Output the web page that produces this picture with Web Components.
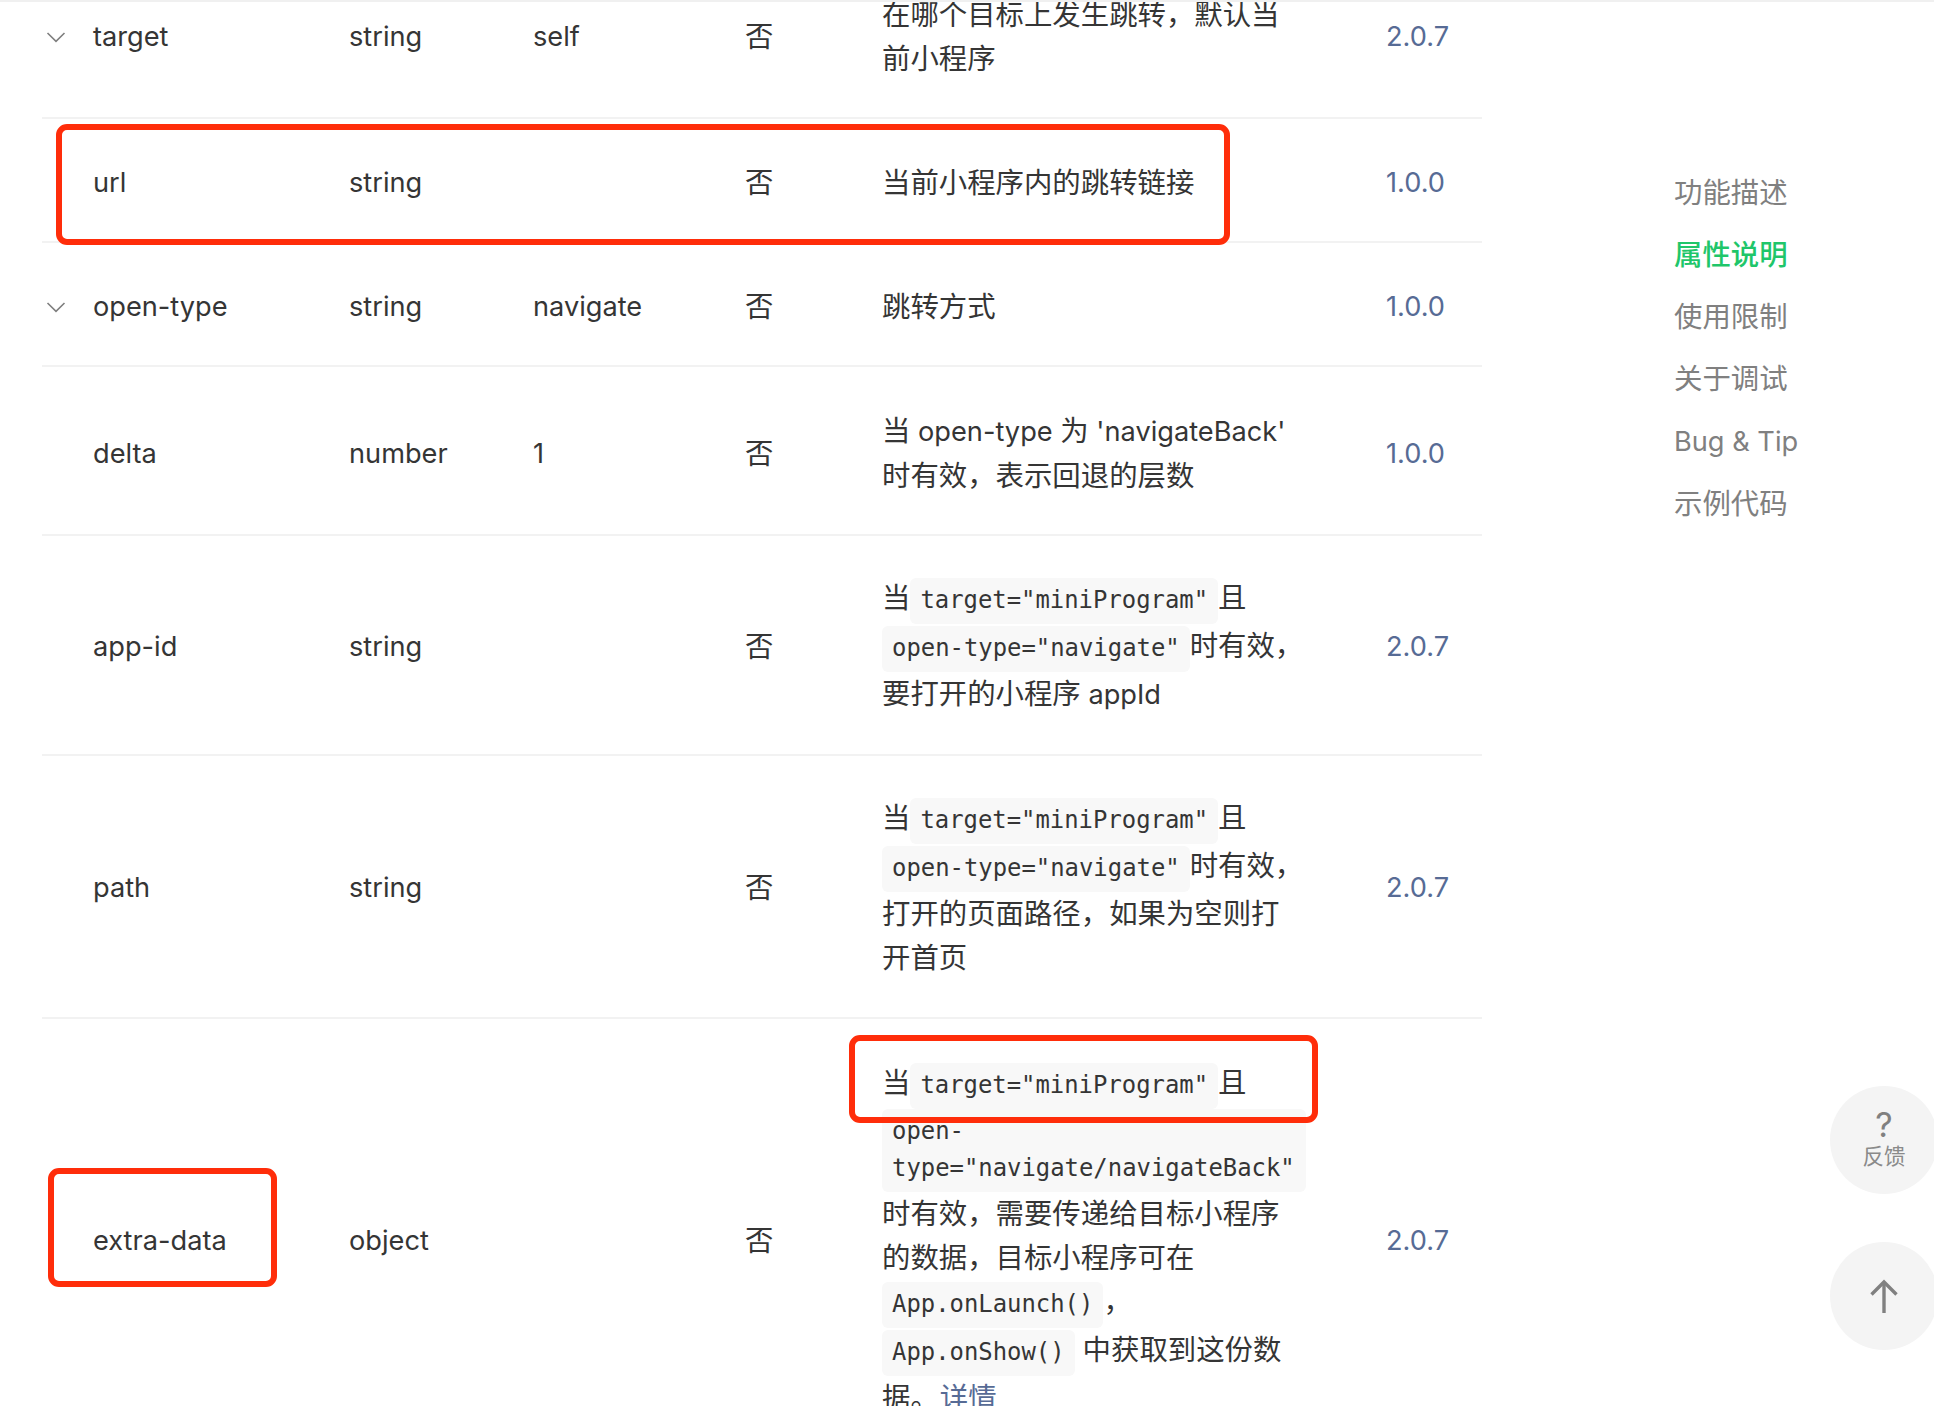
<!DOCTYPE html>
<html lang="zh">
<head>
<meta charset="utf-8">
<title>navigator</title>
<style>
  html, body { margin: 0; height: 1406px; overflow: hidden; background: #fff; }
  body { font-family: Inter, "Noto Sans CJK SC", sans-serif; color: #353535; }
  .l { font-size: 27.2px; }
</style>
</head>
<body>
<doc-page>
  <prop-table>
    <prop-row expandable>
      <span slot="name">target</span><span slot="type">string</span><span slot="def">self</span><span slot="req">否</span>
      <span slot="desc">在哪个目标上发生跳转，默认当前小程序</span><span slot="ver">2.0.7</span>
    </prop-row>
    <prop-row>
      <span slot="name">url</span><span slot="type">string</span><span slot="req">否</span>
      <span slot="desc">当前小程序内的跳转链接</span><span slot="ver">1.0.0</span>
    </prop-row>
    <prop-row expandable>
      <span slot="name">open-type</span><span slot="type">string</span><span slot="def">navigate</span><span slot="req">否</span>
      <span slot="desc">跳转方式</span><span slot="ver">1.0.0</span>
    </prop-row>
    <prop-row>
      <span slot="name">delta</span><span slot="type">number</span><span slot="def">1</span><span slot="req">否</span>
      <span slot="desc">当<span class="l"> open-type </span>为<span class="l"> 'navigateBack' </span>时有效，表示回退的层数</span><span slot="ver">1.0.0</span>
    </prop-row>
    <prop-row style="--pt:40px;--pb:37px">
      <span slot="name">app-id</span><span slot="type">string</span><span slot="req">否</span>
      <span slot="desc">当<code-tag>target="miniProgram"</code-tag>且<code-tag>open-type="navigate"</code-tag>时有效，要打开的小程序<span class="l"> appId</span></span><span slot="ver">2.0.7</span>
    </prop-row>
    <prop-row style="--pt:40px;--pb:37px">
      <span slot="name">path</span><span slot="type">string</span><span slot="req">否</span>
      <span slot="desc">当<code-tag>target="miniProgram"</code-tag>且<code-tag>open-type="navigate"</code-tag>时有效，打开的页面路径，如果为空则打开首页</span><span slot="ver">2.0.7</span>
    </prop-row>
    <prop-row style="--pt:42px;--pb:37px">
      <span slot="name">extra-data</span><span slot="type">object</span><span slot="req">否</span>
      <span slot="desc">当<code-tag>target="miniProgram"</code-tag>且<code-tag>open-type="navigate/navigateBack"</code-tag>时有效，需要传递给目标小程序的数据，目标小程序可在<code-tag>App.onLaunch()</code-tag>，<code-tag>App.onShow()</code-tag> 中获取到这份数据。<doc-link>详情</doc-link></span><span slot="ver">2.0.7</span>
    </prop-row>
  </prop-table>
  <toc-nav slot="aside">
    <toc-item>功能描述</toc-item>
    <toc-item active>属性说明</toc-item>
    <toc-item>使用限制</toc-item>
    <toc-item>关于调试</toc-item>
    <toc-item><span class="l">Bug &amp; Tip</span></toc-item>
    <toc-item>示例代码</toc-item>
  </toc-nav>
</doc-page>

<mark-box style="--x:56px;--y:124px;--w:1174px;--h:121px"></mark-box>
<mark-box style="--x:849px;--y:1035px;--w:469px;--h:88px"></mark-box>
<mark-box style="--x:48px;--y:1168px;--w:229px;--h:119px"></mark-box>

<float-btn style="--top:1086px">
  <span class="q">?</span>
  <span>反馈</span>
</float-btn>
<float-btn style="--top:1242px">
  <svg width="30" height="34" viewBox="0 0 30 34" fill="none" stroke="#808080" stroke-width="3.4"><path d="M15 34V3"/><path d="M2.5 15.5 15 3l12.5 12.5"/></svg>
</float-btn>

<script>
class DocPage extends HTMLElement {
  constructor() {
    super();
    this.attachShadow({ mode: 'open' }).innerHTML = `
      <style>
        :host { display: block; }
        .band { height: 2px; background: #f0f0f0; position: relative; z-index: 1; }
        .wrap { display: flex; align-items: flex-start; padding-left: 42px; }
        .main { width: 1440px; margin-top: -51px; }
        .aside { margin-left: 192px; padding-top: 169px; }
      </style>
      <div class="band"></div>
      <div class="wrap">
        <div class="main"><slot></slot></div>
        <div class="aside"><slot name="aside"></slot></div>
      </div>
    `;
  }
}

class PropTable extends HTMLElement {
  constructor() {
    super();
    this.attachShadow({ mode: 'open' }).innerHTML = `
      <style>:host { display: block; }</style>
      <slot></slot>
    `;
  }
}

class PropRow extends HTMLElement {
  constructor() {
    super();
    this.attachShadow({ mode: 'open' }).innerHTML = `
      <style>
        :host {
          display: grid;
          grid-template-columns: 51px 256px 184px 212px 137px 504px 96px;
          align-items: center;
          padding: var(--pt, 42px) 0 var(--pb, 36px);
          border-bottom: 2px solid #f2f2f2;
          font-size: 27.2px;
          line-height: 44px;
        }
        .arrow { display: flex; padding-left: 4px; }
        .arrow svg { display: none; }
        :host([expandable]) .arrow svg { display: block; }
        .req, .desc { font-size: 28.4px; }
        .desc { width: 424px; }
        .ver { color: #576b95; }
      </style>
      <div class="arrow">
        <svg width="20" height="12" viewBox="0 0 20 12" fill="none" stroke="#7f7f7f" stroke-width="1.6"><path d="M1.5 2 10 10.3 18.5 2"/></svg>
      </div>
      <div><slot name="name"></slot></div>
      <div><slot name="type"></slot></div>
      <div><slot name="def"></slot></div>
      <div class="req"><slot name="req"></slot></div>
      <div class="desc"><slot name="desc"></slot></div>
      <div class="ver"><slot name="ver"></slot></div>
    `;
  }
}

class CodeTag extends HTMLElement {
  constructor() {
    super();
    this.attachShadow({ mode: 'open' }).innerHTML = `
      <style>
        :host {
          display: inline-block;
          box-sizing: border-box;
          max-width: 100%;
          padding: 4px 10px 5px;
          border-radius: 6px;
          background: #f8f8f8;
          font-family: "DejaVu Sans Mono", monospace;
          font-size: 23.9px;
          line-height: 37px;
        }
      </style>
      <slot></slot>
    `;
  }
}

class DocLink extends HTMLElement {
  constructor() {
    super();
    this.attachShadow({ mode: 'open' }).innerHTML = `
      <style>:host { color: #576b95; margin-left: -7px; }</style>
      <slot></slot>
    `;
  }
}

class TocNav extends HTMLElement {
  constructor() {
    super();
    this.attachShadow({ mode: 'open' }).innerHTML = `
      <style>:host { display: flex; flex-direction: column; gap: 18px; }</style>
      <slot></slot>
    `;
  }
}

class TocItem extends HTMLElement {
  constructor() {
    super();
    this.attachShadow({ mode: 'open' }).innerHTML = `
      <style>
        :host { display: block; font-size: 28.4px; line-height: 44px; color: #808080; white-space: nowrap; }
        :host([active]) { color: #1fc66a; font-weight: 500; }
      </style>
      <slot></slot>
    `;
  }
}

class MarkBox extends HTMLElement {
  constructor() {
    super();
    this.attachShadow({ mode: 'open' }).innerHTML = `
      <style>
        :host {
          position: absolute;
          left: var(--x); top: var(--y);
          width: var(--w); height: var(--h);
          box-sizing: border-box;
          border: 6px solid #ff2d0a;
          border-radius: 11px;
        }
      </style>
    `;
  }
}

class FloatBtn extends HTMLElement {
  constructor() {
    super();
    this.attachShadow({ mode: 'open' }).innerHTML = `
      <style>
        :host {
          position: absolute;
          left: 1830px; top: var(--top);
          width: 108px; height: 108px;
          border-radius: 50%;
          background: #f4f4f4;
          display: flex; flex-direction: column; align-items: center; justify-content: center;
          font-size: 21.5px; line-height: 26px; color: #8a8a8a;
        }
        ::slotted(.q) { font-size: 34px; line-height: 36px; margin-top: -4px; color: #808080; }
      </style>
      <slot></slot>
    `;
  }
}

customElements.define('doc-page', DocPage);
customElements.define('prop-table', PropTable);
customElements.define('prop-row', PropRow);
customElements.define('code-tag', CodeTag);
customElements.define('doc-link', DocLink);
customElements.define('toc-nav', TocNav);
customElements.define('toc-item', TocItem);
customElements.define('mark-box', MarkBox);
customElements.define('float-btn', FloatBtn);
</script>
</body>
</html>
